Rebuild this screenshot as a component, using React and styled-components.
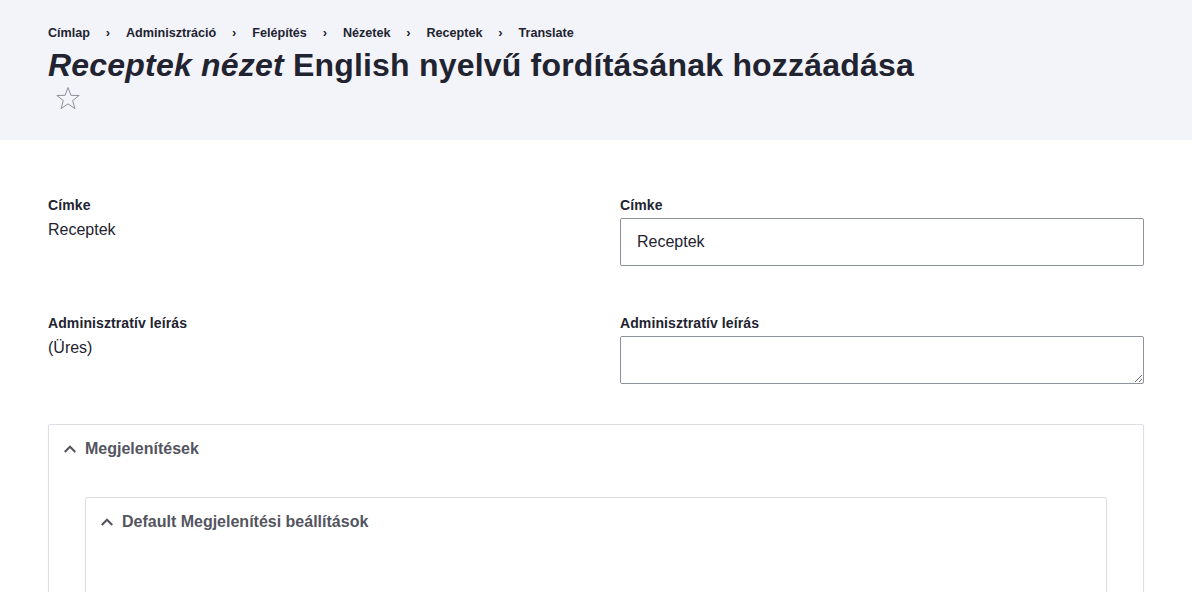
import React from 'react';
import styled, {createGlobalStyle} from 'styled-components';

const GlobalStyle = createGlobalStyle`
  body {
    margin: 0;
    background: #fff;
    font-family: "Liberation Sans", Arial, sans-serif;
    color: #222330;
  }
`

const Header = styled.header`
  background: #f3f4f9;
  height: 140px;
  box-sizing: border-box;
  padding: 25px 48px 0;
`

const Crumbs = styled.nav`
  display: flex;
  align-items: center;
  font-size: 12.6px;
  font-weight: bold;
  line-height: 16px;
`

const Crumb = styled.span`
  color: #222330;
`

const Sep = styled.span`
  width: 36px;
  text-align: center;
  font-size: 13px;
  color: #222330;
`

const Title = styled.h1`
  margin: 4px 0 0;
  font-size: 32px;
  line-height: 40px;
  font-weight: bold;
  color: #222330;
  letter-spacing: 0.2px;
`

const Star = styled.div`
  width: 40px;
  height: 32px;
  display: flex;
  align-items: center;
  justify-content: center;
  margin-top: -3px;
`

const Main = styled.main`
  padding: 55px 48px 0;
`

const FieldRow = styled.div`
  display: grid;
  grid-template-columns: 1fr 1fr;
  column-gap: 48px;
  margin-bottom: ${p => p.$gap}px;
`

const Label = styled.div`
  font-size: 14px;
  line-height: 18px;
  font-weight: bold;
  letter-spacing: 0.1px;
  margin: 1px 0 4px;
`

const Value = styled.div`
  font-size: 16px;
  line-height: 24px;
`

const Input = styled.input`
  display: block;
  width: 100%;
  box-sizing: border-box;
  height: 48px;
  padding: 0 16px;
  border: 1px solid #8e929c;
  border-radius: 2px;
  font: 16px "Liberation Sans", Arial, sans-serif;
  color: #222330;
  background: #fff;
`

const TextArea = styled.textarea`
  display: block;
  width: 100%;
  box-sizing: border-box;
  height: 48px;
  padding: 8px 16px;
  border: 1px solid #8e929c;
  border-radius: 2px;
  font: 16px "Liberation Sans", Arial, sans-serif;
  resize: vertical;
`

const Details = styled.div`
  border: 1px solid #dedfe4;
  border-radius: 2px;
  box-shadow: 0 1px 2px rgba(0,0,0,0.04);
  min-height: ${p => p.$min}px;
`

const Summary = styled.div`
  display: flex;
  align-items: center;
  height: 47px;
  padding-left: 14px;
  font-size: 16px;
  font-weight: bold;
  color: #545560;
  gap: 8px;
`

const Body = styled.div`
  padding: 25px 36px 0;
`

const Chevron = () => (
  <svg width="14" height="14" viewBox="0 0 16 16">
    <path d="M2 11.5 L8 5.5 L14 11.5" fill="none" stroke="#545560" strokeWidth="2.4" />
  </svg>
)

const crumbs = ['Címlap', 'Adminisztráció', 'Felépítés', 'Nézetek', 'Receptek', 'Translate'];

export default function App() {
  return (
    <>
      <GlobalStyle />
      <Header>
        <Crumbs>
          {crumbs.map((c, i) => (
            <React.Fragment key={c}>
              {i > 0 && <Sep>›</Sep>}
              <Crumb>{c}</Crumb>
            </React.Fragment>
          ))}
        </Crumbs>
        <Title><i>Receptek nézet</i> English nyelvű fordításának hozzáadása</Title>
        <Star>
          <svg width="26" height="25" viewBox="0 0 26 25">
            <path d="M13 1.5 L15.9 9.3 L24.2 9.5 L17.6 14.6 L20 22.6 L13 17.9 L6 22.6 L8.4 14.6 L1.8 9.5 L10.1 9.3 Z"
              fill="none" stroke="#8e929c" strokeWidth="1" strokeLinejoin="round" />
          </svg>
        </Star>
      </Header>
      <Main>
        <FieldRow $gap={47}>
          <div>
            <Label>Címke</Label>
            <Value>Receptek</Value>
          </div>
          <div>
            <Label>Címke</Label>
            <Input defaultValue="Receptek" />
          </div>
        </FieldRow>
        <FieldRow $gap={40}>
          <div>
            <Label>Adminisztratív leírás</Label>
            <Value>(Üres)</Value>
          </div>
          <div>
            <Label>Adminisztratív leírás</Label>
            <TextArea />
          </div>
        </FieldRow>
        <Details $min={200}>
          <Summary><Chevron />Megjelenítések</Summary>
          <Body>
            <Details $min={120}>
              <Summary><Chevron />Default Megjelenítési beállítások</Summary>
            </Details>
          </Body>
        </Details>
      </Main>
    </>
  );
}
